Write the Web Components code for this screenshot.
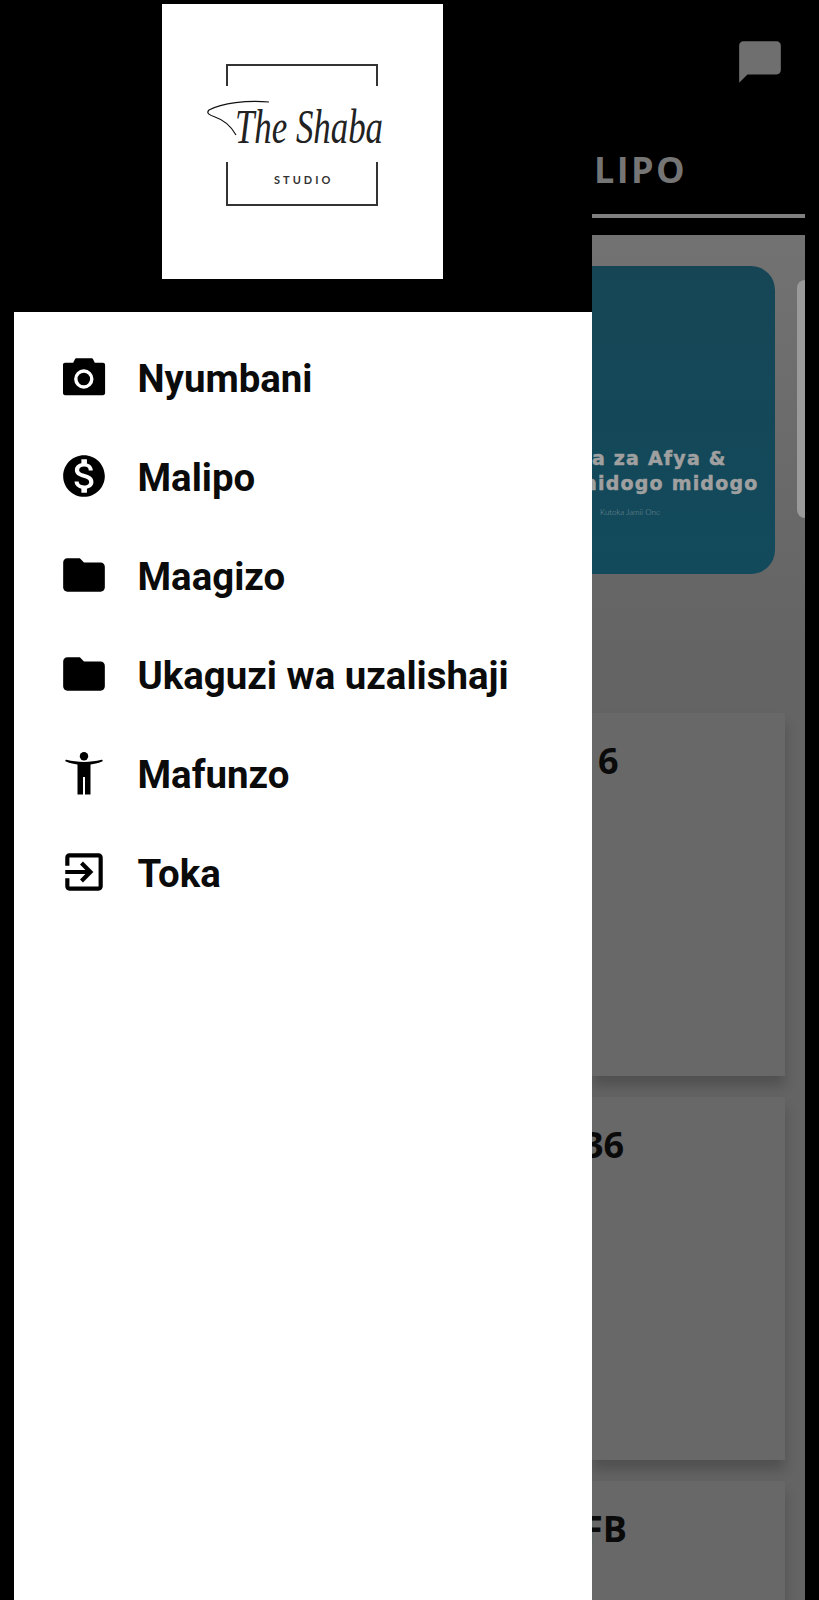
<!DOCTYPE html>
<html>
<head>
<meta charset="utf-8">
<title>The Shaba Studio</title>
<style>
    html, body { margin: 0; padding: 0; background: #000; }
    body { width: 819px; height: 1600px; overflow: hidden; }
</style>
</head>
<body>
<app-shell>
    <side-drawer slot="drawer">
        <shaba-logo slot="head"></shaba-logo>
        <nav-item icon="camera">Nyumbani</nav-item>
        <nav-item icon="money">Malipo</nav-item>
        <nav-item icon="folder">Maagizo</nav-item>
        <nav-item icon="folder">Ukaguzi wa uzalishaji</nav-item>
        <nav-item icon="person">Mafunzo</nav-item>
        <nav-item icon="exit">Toka</nav-item>
    </side-drawer>
    <top-tabs slot="top" label="LIPO"></top-tabs>
    <promo-banner slot="main"></promo-banner>
    <order-card slot="main" code="6"></order-card>
    <order-card slot="main" code="36" cut></order-card>
    <order-card slot="main" code="FB" cut></order-card>
</app-shell>

<script>
const ICONS = {
    camera: `<path d="M6.200 10.700h8l1.600-3.200c.3-.7.9-1.200 1.700-1.200h15c.8 0 1.400.5 1.700 1.200l1.600 3.200h8c1.400 0 2.300.9 2.300 2.200v28.200c0 1.300-.9 2.200-2.300 2.200H6.200c-1.400 0-2.200-.9-2.200-2.200V12.900c0-1.300.8-2.200 2.200-2.200z"/><circle cx="24.800" cy="27" r="8" fill="none" stroke="#fff" stroke-width="3.400"/>`,
    money: `<g transform="scale(2.083)"><path d="M12 2C6.480 2 2 6.480 2 12s4.480 10 10 10 10-4.480 10-10S17.520 2 12 2zm1.410 16.090V20h-2.670v-1.930c-1.710-.36-3.160-1.460-3.270-3.400h1.960c.1 1.050.82 1.870 2.650 1.870 1.960 0 2.400-.98 2.400-1.590 0-.83-.44-1.610-2.670-2.140-2.480-.6-4.180-1.620-4.180-3.670 0-1.720 1.390-2.840 3.110-3.210V4h2.670v1.950c1.860.45 2.790 1.860 2.850 3.390H14.300c-.05-1.110-.64-1.870-2.220-1.870-1.500 0-2.400.68-2.400 1.640 0 .84.65 1.390 2.670 1.910s4.180 1.390 4.180 3.910c-.01 1.830-1.380 2.830-3.120 3.160z"/></g>`,
    folder: `<g transform="scale(2.083)"><path d="M10 4H4c-1.100 0-1.990.9-1.990 2L2 18c0 1.100.9 2 2 2h16c1.100 0 2-.9 2-2V8c0-1.100-.9-2-2-2h-8l-2-2z"/></g>`,
    person: `<circle cx="25" cy="8.200" r="4.200"/><path d="M7.500 11.800c-1.200-.1-1.600 1.300-.6 1.800 3.600 1.500 7.500 2.500 11.600 3V46.500h5.500V29h2V46.500h5.500V16.600c4.100-.5 8-1.500 11.600-3 1-.5.6-1.900-.6-1.800-5.700 1.400-11.500 2.100-17.500 2.100s-11.800-.7-17.500-2.100z"/>`,
    exit: `<g transform="scale(2.083)"><path d="M10.090 15.590L11.500 17l5-5-5-5-1.410 1.410L12.670 11H3v2h9.670l-2.580 2.590zM19 3H5c-1.110 0-2 .9-2 2v4h2V5h14v14H5v-4H3v4c0 1.100.89 2 2 2h14c1.100 0 2-.9 2-2V5c0-1.100-.9-2-2-2z"/></g>`
};

class AppShell extends HTMLElement {
    constructor() {
        super();
        this.attachShadow({mode: 'open'});
        this.shadowRoot.innerHTML = `
            <style>
                :host { display: flex; width: 791px; height: 1600px; margin-left: 14px; overflow: hidden; }
                .side { width: 578px; flex: none; }
                .rest { flex: 1; min-width: 0; display: flex; flex-direction: column; }
                .panel {
                    flex: 1;
                    display: flex;
                    flex-direction: column;
                    background: linear-gradient(#727272, #646464 30%, #646464);
                    padding-top: 31px;
                    overflow: hidden;
                }
            </style>
            <div class="side"><slot name="drawer"></slot></div>
            <div class="rest">
                <slot name="top"></slot>
                <div class="panel"><slot name="main"></slot></div>
            </div>
        `;
    }
}

class SideDrawer extends HTMLElement {
    constructor() {
        super();
        this.attachShadow({mode: 'open'});
        this.shadowRoot.innerHTML = `
            <style>
                :host { display: flex; flex-direction: column; height: 1600px; }
                .head { height: 312px; box-sizing: border-box; padding: 4px 1.500px 0 0; display: flex; justify-content: center; }
                nav { flex: 1; background: #fff; padding-top: 15px; display: flex; flex-direction: column; }
            </style>
            <div class="head"><slot name="head"></slot></div>
            <nav><slot></slot></nav>
        `;
    }
}

class ShabaLogo extends HTMLElement {
    constructor() {
        super();
        this.attachShadow({mode: 'open'});
        this.shadowRoot.innerHTML = `
            <style>
                :host { display: block; width: 281px; height: 275px; background: #fff; }
                svg { display: block; }
            </style>
            <svg width="281" height="275" viewBox="0 0 281 275">
                <path d="M65 82V61H215V82M65 158V201H215V158" fill="none" stroke="#333" stroke-width="2"/>
                <path d="M107 98C85 96 60 99 47 106C44 109 47 111 53 113C62 116 69 122 74 131" fill="none" stroke="#111" stroke-width="1.200"/>
                <text x="73" y="139" font-family="'Liberation Serif', serif" font-style="italic" font-size="48" fill="#222" textLength="148" lengthAdjust="spacingAndGlyphs">The Shaba</text>
                <text x="112" y="180" font-family="Lato, sans-serif" font-weight="700" font-size="11" letter-spacing="3" fill="#333">STUDIO</text>
            </svg>
        `;
    }
}

class NavItem extends HTMLElement {
    constructor() {
        super();
        this.attachShadow({mode: 'open'});
        this.shadowRoot.innerHTML = `
            <style>
                :host {
                    display: flex;
                    align-items: center;
                    height: 99px;
                    padding-left: 44.500px;
                    gap: 29px;
                    font: 700 38.400px Roboto, sans-serif;
                    color: #0b0b0b;
                }
                svg { width: 50px; height: 50px; flex: none; fill: #000; }
                span { padding-top: 4px; }
            </style>
            <svg viewBox="0 0 50 50">${ICONS[this.getAttribute('icon')]}</svg>
            <span><slot></slot></span>
        `;
    }
}

class TopTabs extends HTMLElement {
    constructor() {
        super();
        this.attachShadow({mode: 'open'});
        this.shadowRoot.innerHTML = `
            <style>
                :host { display: flex; flex-direction: column; height: 235px; color: #757575; }
                .icons { height: 150px; display: flex; justify-content: flex-end; padding: 37px 20px 0 0; box-sizing: border-box; }
                svg { width: 50px; height: 50px; fill: #6f6f6f; }
                .tab {
                    height: 63.500px;
                    padding-left: 2px;
                    font: 700 36px "Open Sans", sans-serif;
                    letter-spacing: 2.400px;
                    line-height: 40px;
                    box-sizing: border-box;
                }
                .bar { height: 4.500px; margin-bottom: 17px; background: #808080; }
            </style>
            <div class="icons">
                <svg viewBox="0 0 24 24"><path d="M20 2H4c-1.100 0-2 .9-2 2v18l4-4h14c1.100 0 2-.9 2-2V4c0-1.100-.9-2-2-2z"/></svg>
            </div>
            <div class="tab"></div>
            <div class="bar"></div>
        `;
        this.shadowRoot.querySelector('.tab').textContent = this.getAttribute('label');
    }
}

class PromoBanner extends HTMLElement {
    constructor() {
        super();
        this.attachShadow({mode: 'open'});
        this.shadowRoot.innerHTML = `
            <style>
                :host { display: flex; height: 308px; flex: none; justify-content: space-between; margin-bottom: 139px; }
                .card {
                    width: 183px;
                    border-radius: 0 24px 24px 0;
                    background: linear-gradient(#164656, #124a5c);
                    box-sizing: border-box;
                    padding-top: 180px;
                    overflow: hidden;
                    color: #a0a0a0;
                    font: 700 19px "DejaVu Sans", sans-serif;
                    -webkit-text-stroke: .5px #a0a0a0;
                    letter-spacing: 1.200px;
                    line-height: 25px;
                    white-space: nowrap;
                }
                .cut { margin-left: -15px; }
                small {
                    display: block;
                    margin: 10px 0 0 8px;
                    font: 300 8px/12px Lato, sans-serif;
                    -webkit-text-stroke: 0;
                    letter-spacing: 0;
                    color: #7c9299;
                }
                .peek {
                    width: 8px;
                    height: 238px;
                    margin-top: 14px;
                    background: #9a9a9a;
                    border-radius: 10px 0 0 10px;
                }
            </style>
            <div class="card">
                <div>a za Afya &amp;</div>
                <div class="cut">midogo midogo</div>
                <small>Kutoka Jamii One</small>
            </div>
            <div class="peek"></div>
        `;
    }
}

class OrderCard extends HTMLElement {
    constructor() {
        super();
        this.attachShadow({mode: 'open'});
        this.shadowRoot.innerHTML = `
            <style>
                :host {
                    display: block;
                    flex: none;
                    width: 193px;
                    height: 363px;
                    margin-bottom: 21px;
                    box-sizing: border-box;
                    padding: 24px 0 0 6px;
                    background: #686868;
                    box-shadow: 0 10px 12px rgba(0, 0, 0, .2);
                    overflow: hidden;
                    font: 700 36px/48px "Open Sans", sans-serif;
                    color: #0a0a0a;
                }
                :host([cut]) { padding-left: 0; }
                :host([cut]) span { margin-left: -9px; }
            </style>
            <span></span>
        `;
        this.shadowRoot.querySelector('span').textContent = this.getAttribute('code');
    }
}

window.customElements.define('app-shell', AppShell);
window.customElements.define('side-drawer', SideDrawer);
window.customElements.define('shaba-logo', ShabaLogo);
window.customElements.define('nav-item', NavItem);
window.customElements.define('top-tabs', TopTabs);
window.customElements.define('promo-banner', PromoBanner);
window.customElements.define('order-card', OrderCard);
</script>
</body>
</html>
